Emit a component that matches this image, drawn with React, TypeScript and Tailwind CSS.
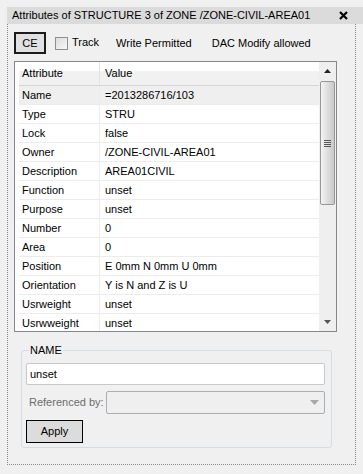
import React from "react";

const rows: [string, string][] = [
  ["Name", "=2013286716/103"],
  ["Type", "STRU"],
  ["Lock", "false"],
  ["Owner", "/ZONE-CIVIL-AREA01"],
  ["Description", "AREA01CIVIL"],
  ["Function", "unset"],
  ["Purpose", "unset"],
  ["Number", "0"],
  ["Area", "0"],
  ["Position", "E 0mm N 0mm U 0mm"],
  ["Orientation", "Y is N and Z is U"],
  ["Usrweight", "unset"],
  ["Usrwweight", "unset"],
];

const Scrollbar = () => (
  <div className="w-[17px] h-full bg-[#efefef] flex flex-col items-center">
    {/* up arrow */}
    <div className="h-[18px] w-full flex items-center justify-center">
      <svg width="7" height="4" viewBox="0 0 7 4">
        <path d="M0 4 L3.5 0 L7 4 Z" fill="#222" />
      </svg>
    </div>
    {/* thumb */}
    <div className="mt-[1px] w-[15px] h-[124px] rounded-[2px] border border-[#979797] bg-gradient-to-r from-[#f4f4f4] via-[#dedede] to-[#c9c9c9] flex flex-col items-center justify-center gap-[1px]">
      <div className="w-[7px] h-[1px] bg-[#555]" />
      <div className="w-[7px] h-[1px] bg-[#555]" />
      <div className="w-[7px] h-[1px] bg-[#555]" />
      <div className="w-[7px] h-[1px] bg-[#555]" />
    </div>
    <div className="flex-1" />
    {/* down arrow */}
    <div className="h-[18px] w-full flex items-center justify-center">
      <svg width="7" height="4" viewBox="0 0 7 4">
        <path d="M0 0 L7 0 L3.5 4 Z" fill="#555" />
      </svg>
    </div>
  </div>
);

export default function App() {
  return (
    <div className="w-[363px] h-[474px] bg-[#f0f0f0] pt-[7px] pl-[7px] font-['Liberation_Sans',Arial,sans-serif] text-[11px] text-black overflow-hidden">
      {/* Title bar */}
      <div className="h-[17px] bg-[#dbdbdb] flex items-center justify-between pl-[5px] pr-[15px]">
        <span>Attributes of STRUCTURE 3 of ZONE /ZONE-CIVIL-AREA01</span>
        <svg width="9" height="9" viewBox="0 0 9 9">
          <path d="M1 1 L8 8 M8 1 L1 8" stroke="#000" strokeWidth="2.2" />
        </svg>
      </div>

      {/* Dotted frame */}
      <div className="w-[349px] h-[441px] border border-t-0 border-dotted border-[#8a8a8a] flex flex-col">
        {/* Toolbar */}
        <div className="mt-[8px] pl-[6px] h-[22px] flex items-center">
          <button className="w-[32px] h-[22px] border-2 border-[#1c1c1c] bg-[#e1e1e1] flex items-center justify-center">
            CE
          </button>
          <div className="ml-[9px] w-[13px] h-[13px] border border-[#8f8f8f] bg-gradient-to-br from-[#dcdcdc] to-[#f7f7f7]" />
          <span className="ml-[4px] -mt-[2px]">Track</span>
          <span className="ml-[17px]">Write Permitted</span>
          <span className="ml-[20px]">DAC Modify allowed</span>
        </div>

        {/* Table */}
        <div className="mt-[7px] ml-[6px] w-[323px] h-[271px] border border-[#828790] bg-white flex">
          <div className="flex-1 flex flex-col overflow-hidden pl-[4px]">
            <div className="h-[24px] shrink-0 flex border-b border-[#d5d5d5] bg-gradient-to-b from-white from-40% to-[#f1f1f1] to-40%">
              <div className="w-[81px] pl-[3px] flex items-center border-r border-[#e3e3e3]">Attribute</div>
              <div className="flex-1 pl-[5px] flex items-center">Value</div>
            </div>
            {rows.map(([a, v], i) => (
              <div
                key={a}
                className={`h-[19px] shrink-0 flex border-b border-[#ececec] ${i === 0 ? "bg-[#efefef]" : "bg-white"}`}
              >
                <div className="w-[81px] pl-[3px] flex items-center border-r border-[#ececec]">{a}</div>
                <div className="flex-1 pl-[5px] flex items-center whitespace-nowrap">{v}</div>
              </div>
            ))}
          </div>
          <Scrollbar />
        </div>

        {/* NAME group */}
        <div className="relative mt-[18px] ml-[13px] w-[311px] h-[98px] border border-[#d3dde6] rounded-[3px] pt-[12px] pl-[4px] pr-[6px]">
          <span className="absolute -top-[8px] left-[7px] px-[1px] bg-[#f0f0f0] leading-[14px]">NAME</span>
          <div className="h-[22px] w-[299px] border border-[#c5c9cf] rounded-[2px] bg-white flex items-center pl-[3px]">
            unset
          </div>
          <div className="mt-[6px] h-[23px] flex items-center">
            <span className="pl-[3px] w-[80px] text-[#6d6d6d]">Referenced by:</span>
            <div className="w-[219px] h-[23px] border border-[#adadad] rounded-[2px] bg-[#efefef] flex justify-end items-center pr-[5px]">
              <svg width="9" height="5" viewBox="0 0 9 5">
                <path d="M0 0 L9 0 L4.5 5 Z" fill="#a8a8a8" />
              </svg>
            </div>
          </div>
          <button className="mt-[6px] w-[57px] h-[23px] border border-black bg-[#dcdcdc] flex items-center justify-center">
            Apply
          </button>
        </div>
      </div>
    </div>
  );
}
